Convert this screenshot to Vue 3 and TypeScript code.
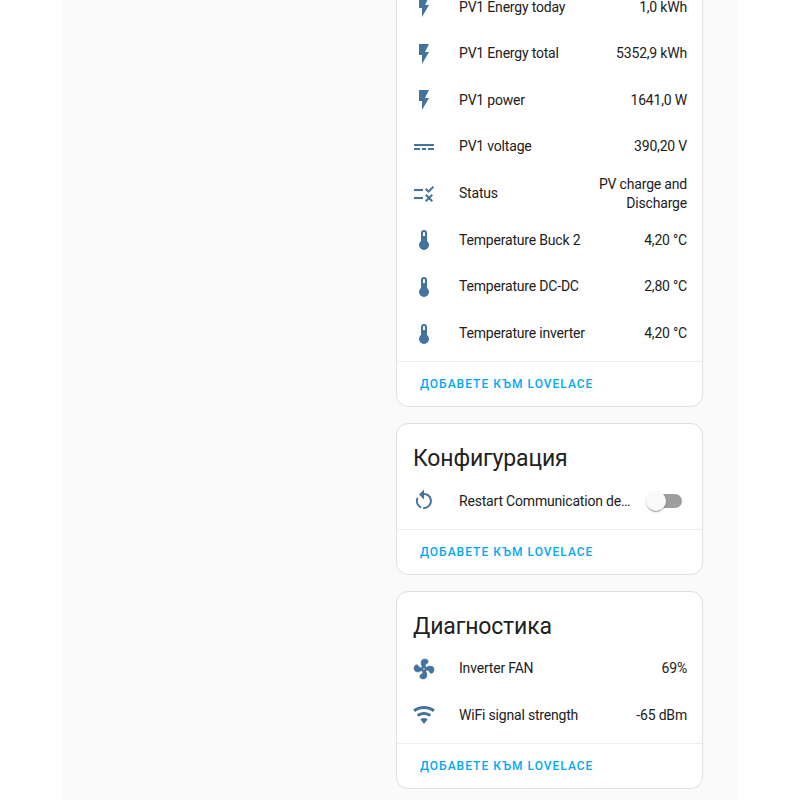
<script setup lang="ts">
const icons = {
  flash: "M7,2V13H10V22L17,10H13L17,2H7Z",
  dc: "M2,9H22V11H2V9M2,13H8V15H2V13M10,13H14V15H10V13M16,13H22V15H16V13Z",
  status:
    "M16.5 11L13 7.5L14.4 6.1L16.5 8.2L20.7 4L22.1 5.4L16.5 11M11 7H2V9H11V7M21 13.4L19.6 12L17 14.6L14.4 12L13 13.4L15.6 16L13 18.6L14.4 20L17 17.4L19.6 20L21 18.6L18.4 16L21 13.4M11 15H2V17H11V15Z",
  thermometer:
    "M15 13V5A3 3 0 0 0 9 5V13A5 5 0 1 0 15 13M12 4A1 1 0 0 1 13 5V8H11V5A1 1 0 0 1 12 4Z",
  restart:
    "M12,4C14.1,4 16.1,4.8 17.6,6.3C20.7,9.4 20.7,14.5 17.6,17.6C15.8,19.5 13.3,20.2 10.9,19.9L11.4,17.9C13.1,18.1 14.9,17.5 16.2,16.2C18.5,13.9 18.5,10.1 16.2,7.7C15.1,6.6 13.5,6 12,6V10.6L7,5.6L12,0.6V4M6.3,17.6C3.7,15 3.2,11 4.9,7.9L6.4,9.4C5.3,11.6 5.7,14.4 7.6,16.2C8.1,16.7 8.7,17.1 9.4,17.4L8.8,19.4C7.8,19 6.9,18.4 6.3,17.6Z",
  fan: "M12,11A1,1 0 0,0 11,12A1,1 0 0,0 12,13A1,1 0 0,0 13,12A1,1 0 0,0 12,11M12.5,2C17,2 17.11,5.57 14.75,6.75C13.76,7.24 13.32,8.29 13.13,9.22C13.61,9.42 14.03,9.73 14.35,10.13C18.05,8.13 22.03,8.92 22.03,12.5C22.03,17 18.46,17.1 17.28,14.73C16.78,13.74 15.72,13.3 14.79,13.11C14.59,13.59 14.28,14 13.88,14.34C15.87,18.03 15.08,22 11.5,22C7,22 6.91,18.42 9.27,17.24C10.25,16.75 10.69,15.71 10.89,14.79C10.4,14.59 9.97,14.27 9.65,13.87C5.96,15.85 2,15.07 2,11.5C2,7 5.56,6.89 6.74,9.26C7.24,10.25 8.29,10.68 9.22,10.87C9.41,10.39 9.73,9.97 10.14,9.65C8.15,5.96 8.94,2 12.5,2Z",
  wifi: "M12,21L15.6,16.2C14.6,15.45 13.35,15 12,15C10.65,15 9.4,15.45 8.4,16.2L12,21M12,3C7.95,3 4.21,4.34 1.2,6.6L3,9C5.5,7.12 8.62,6 12,6C15.38,6 18.5,7.12 21,9L22.8,6.6C19.79,4.34 16.05,3 12,3M12,9C9.3,9 6.81,9.89 4.8,11.4L6.6,13.8C8.1,12.67 9.97,12 12,12C14.03,12 15.9,12.67 17.4,13.8L19.2,11.4C17.19,9.89 14.7,9 12,9Z",
};

type Row = { icon: string; name: string; value?: string; toggle?: boolean };

const cards: { title?: string; rows: Row[] }[] = [
  {
    rows: [
      { icon: icons.flash, name: "PV1 Energy today", value: "1,0 kWh" },
      { icon: icons.flash, name: "PV1 Energy total", value: "5352,9 kWh" },
      { icon: icons.flash, name: "PV1 power", value: "1641,0 W" },
      { icon: icons.dc, name: "PV1 voltage", value: "390,20 V" },
      { icon: icons.status, name: "Status", value: "PV charge and Discharge" },
      { icon: icons.thermometer, name: "Temperature Buck 2", value: "4,20 °C" },
      { icon: icons.thermometer, name: "Temperature DC-DC", value: "2,80 °C" },
      { icon: icons.thermometer, name: "Temperature inverter", value: "4,20 °C" },
    ],
  },
  {
    title: "Конфигурация",
    rows: [{ icon: icons.restart, name: "Restart Communication device", toggle: true }],
  },
  {
    title: "Диагностика",
    rows: [
      { icon: icons.fan, name: "Inverter FAN", value: "69%" },
      { icon: icons.wifi, name: "WiFi signal strength", value: "-65 dBm" },
    ],
  },
];
</script>

<template>
  <div class="page">
    <div class="panel">
      <div class="column">
        <section v-for="(card, i) in cards" :key="i" class="card">
          <h2 v-if="card.title" class="card__title">{{ card.title }}</h2>
          <div class="rows">
            <div v-for="row in card.rows" :key="row.name" class="row">
              <svg
                class="row__icon"
                :class="{ 'row__icon--fat': row.icon === icons.fan }"
                viewBox="0 0 24 24"
              >
                <path :d="row.icon" />
              </svg>
              <span class="row__name">{{ row.name }}</span>
              <span v-if="row.value" class="row__value">{{ row.value }}</span>
              <span v-if="row.toggle" class="switch"><span class="switch__thumb"></span></span>
            </div>
          </div>
          <div class="card__actions">
            <span class="add-btn">Добавете към Lovelace</span>
          </div>
        </section>
      </div>
    </div>
  </div>
</template>

<style>
html,
body {
  margin: 0;
  overflow: hidden;
  background: #fff;
}
</style>

<style scoped>
.page {
  height: 800px;
  overflow: hidden;
  padding: 0 62px;
  font-family: Roboto, "Noto Sans", sans-serif;
  color: #212121;
}

.panel {
  height: 800px;
  background: #fafafa;
  display: flex;
  justify-content: flex-end;
  padding-right: 35px;
}

.column {
  width: 307px;
  margin-top: -14px;
  display: flex;
  flex-direction: column;
  gap: 16px;
}

.card {
  background: #fff;
  border: 1px solid #e0e0e0;
  border-radius: 12px;
}

.card__title {
  margin: 0;
  padding: 0 15px 6px 16px;
  height: 57px;
  display: flex;
  align-items: flex-end;
  font-size: 23px;
  font-weight: 400;
  line-height: 32px;
  letter-spacing: -0.15px;
  box-sizing: border-box;
}

.rows {
  display: flex;
  flex-direction: column;
  gap: 6.67px;
  padding: 0 15px 7.5px;
}

.row {
  display: flex;
  align-items: center;
  min-height: 40px;
  font-size: 14px;
  line-height: 19px;
  letter-spacing: -0.19px;
}

.row__icon {
  width: 24px;
  height: 24px;
  flex: none;
  margin-right: 23px;
  fill: #44739e;
}

.row__icon--fat {
  stroke: #44739e;
  stroke-width: 0.5;
}

.row__name {
  flex: 1;
  min-width: 0;
  white-space: nowrap;
  overflow: hidden;
  text-overflow: ellipsis;
}

.row__value {
  max-width: 100px;
  text-align: right;
  margin-left: 8px;
}

.switch {
  position: relative;
  flex: none;
  width: 34px;
  height: 14px;
  margin: 0 5px 0 14px;
  border-radius: 7px;
  background: #9e9e9e;
}

.switch__thumb {
  position: absolute;
  left: -2px;
  top: -3px;
  width: 20px;
  height: 20px;
  border-radius: 50%;
  background: #fafafa;
  box-shadow: 0 2px 1px -1px rgba(0, 0, 0, 0.2), 0 1px 1px 0 rgba(0, 0, 0, 0.14),
    0 1px 3px 0 rgba(0, 0, 0, 0.12);
}

.card__actions {
  height: 44px;
  border-top: 1px solid #eeeeee;
  display: flex;
  align-items: center;
  padding-left: 23px;
}

.add-btn {
  font-size: 12px;
  font-weight: 500;
  letter-spacing: 1px;
  text-transform: uppercase;
  color: #03a9f4;
}
</style>
